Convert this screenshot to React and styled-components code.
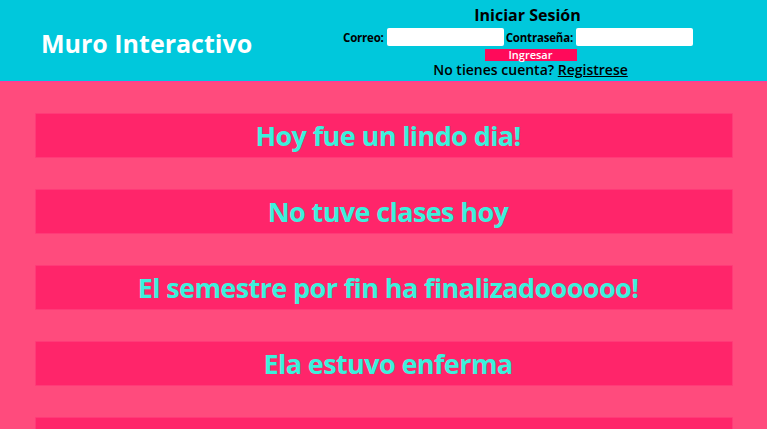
import React from "react";
import styled, { createGlobalStyle } from "styled-components";

const Global = createGlobalStyle`
  html, body { margin: 0; padding: 0; }
  body {
    background: #ff4b7d;
    font-family: "Open Sans", "Liberation Sans", sans-serif;
    overflow: hidden;
  }
`;

const Header = styled.header`
  height: 81px;
  background: #00c8dc;
  display: flex;
  align-items: center;
  padding-left: 41px;
  box-shadow: 0 1px 1px #ff3a9c;
  position: relative;
  z-index: 1;
`;

const Brand = styled.h1`
  margin: 5px 0 0;
  width: 303px;
  color: #fff;
  font-size: 25px;
  font-weight: 700;
`;

const Login = styled.div`
  display: flex;
  flex-direction: column;
  align-items: center;
  width: 370px;
  padding-top: 3px;
`;

const LoginTitle = styled.div`
  font-size: 16px;
  font-weight: 700;
  color: #000;
  line-height: 18px;
  margin-left: -3px;
`;

const FormRow = styled.div`
  display: flex;
  align-items: center;
  margin-left: -20px;
  margin-top: 3px;
  height: 20px;
`;

const Label = styled.label`
  font-size: 11.5px;
  font-weight: 700;
  color: #000;
  margin-right: 3px;
  letter-spacing: -0.2px;
`;

const Input = styled.input`
  width: 117px;
  height: 18px;
  box-sizing: border-box;
  border: none;
  border-radius: 2px;
  background: #fff;
  padding: 0;
  margin-right: 2px;
  outline: none;
`;

const Button = styled.button`
  width: 92px;
  height: 12px;
  border: none;
  background: #ff0a5a;
  color: #fff;
  font-family: "Open Sans", "Liberation Sans", sans-serif;
  font-size: 11px;
  font-weight: 600;
  line-height: 12px;
  padding: 0;
  margin-top: 2px;
  margin-left: 3px;
`;

const Signup = styled.div`
  font-size: 14px;
  font-weight: 600;
  color: #000;
  line-height: 16px;
  margin-left: 3px;
  margin-top: 1px;
`;

const SignupLink = styled.a`
  color: #000;
  text-decoration: underline;
`;

const Feed = styled.main`
  display: flex;
  flex-direction: column;
  gap: 31px;
  padding: 32px 34px 0 35px;
`;

const Post = styled.div`
  height: 45px;
  box-sizing: border-box;
  background: #ff256a;
  border: 1px solid #ff3a78;
  border-radius: 1px;
  padding-left: 8px;
  display: flex;
  align-items: center;
  justify-content: center;
  color: #3cf0dc;
  font-size: 27px;
  font-weight: 700;
  letter-spacing: -0.6px;
`;

const posts = [
  "Hoy fue un lindo dia!",
  "No tuve clases hoy",
  "El semestre por fin ha finalizadoooooo!",
  "Ela estuvo enferma",
  "",
];

export default function App() {
  return (
    <>
      <Global />
      <Header>
        <Brand>Muro Interactivo</Brand>
        <Login>
          <LoginTitle>Iniciar Sesión</LoginTitle>
          <FormRow>
            <Label>Correo:</Label>
            <Input type="text" />
            <Label>Contraseña:</Label>
            <Input type="password" />
          </FormRow>
          <Button>Ingresar</Button>
          <Signup>
            No tienes cuenta? <SignupLink>Registrese</SignupLink>
          </Signup>
        </Login>
      </Header>
      <Feed>
        {posts.map((p, i) => (
          <Post key={i}>{p}</Post>
        ))}
      </Feed>
    </>
  );
}
